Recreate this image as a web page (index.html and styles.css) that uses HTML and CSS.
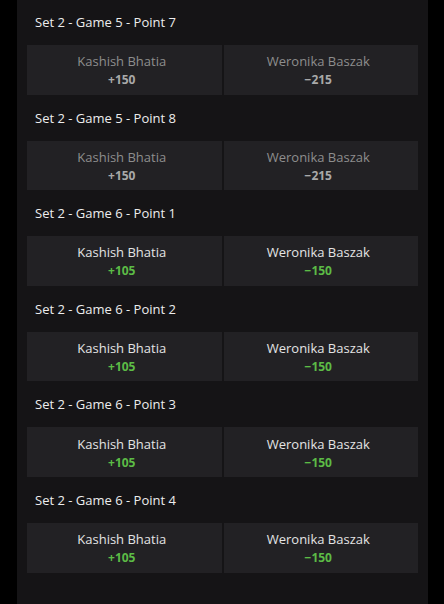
FILE: index.html
```html
<!DOCTYPE html>
<html>
<head>
<meta charset="utf-8">
<link rel="stylesheet" href="styles.css">
</head>
<body>
<div class="frame">
  <main class="panel">
    <section class="market">
      <h2 class="title">Set 2 - Game 5 - Point 7</h2>
      <div class="row">
        <div class="cell dim"><span class="name">Kashish Bhatia</span><span class="odds">+150</span></div>
        <div class="cell dim"><span class="name">Weronika Baszak</span><span class="odds">&minus;215</span></div>
      </div>
    </section>
    <section class="market">
      <h2 class="title">Set 2 - Game 5 - Point 8</h2>
      <div class="row">
        <div class="cell dim"><span class="name">Kashish Bhatia</span><span class="odds">+150</span></div>
        <div class="cell dim"><span class="name">Weronika Baszak</span><span class="odds">&minus;215</span></div>
      </div>
    </section>
    <section class="market">
      <h2 class="title">Set 2 - Game 6 - Point 1</h2>
      <div class="row">
        <div class="cell"><span class="name">Kashish Bhatia</span><span class="odds">+105</span></div>
        <div class="cell"><span class="name">Weronika Baszak</span><span class="odds">&minus;150</span></div>
      </div>
    </section>
    <section class="market">
      <h2 class="title">Set 2 - Game 6 - Point 2</h2>
      <div class="row">
        <div class="cell"><span class="name">Kashish Bhatia</span><span class="odds">+105</span></div>
        <div class="cell"><span class="name">Weronika Baszak</span><span class="odds">&minus;150</span></div>
      </div>
    </section>
    <section class="market">
      <h2 class="title">Set 2 - Game 6 - Point 3</h2>
      <div class="row">
        <div class="cell"><span class="name">Kashish Bhatia</span><span class="odds">+105</span></div>
        <div class="cell"><span class="name">Weronika Baszak</span><span class="odds">&minus;150</span></div>
      </div>
    </section>
    <section class="market">
      <h2 class="title">Set 2 - Game 6 - Point 4</h2>
      <div class="row">
        <div class="cell"><span class="name">Kashish Bhatia</span><span class="odds">+105</span></div>
        <div class="cell"><span class="name">Weronika Baszak</span><span class="odds">&minus;150</span></div>
      </div>
    </section>
  </main>
  <div class="scrolltrack"><div class="thumb"></div></div>
</div>
</body>
</html>
```

FILE: styles.css
```css
html, body {
  margin: 0;
  padding: 0;
  background: #000;
  height: 100%;
  overflow: hidden;
}
body {
  font-family: "Open Sans", "Noto Sans", sans-serif;
  color: #e8e8e8;
}
.frame {
  display: flex;
  height: 604px;
  padding-left: 17px;
}
.panel {
  width: 391px;
  background: #151416;
  padding: 0 10px;
  flex: none;
}
.market {
  display: flex;
  flex-direction: column;
  height: 95.6px;
}
.title {
  margin: 0;
  font-size: 13px;
  font-weight: 400;
  line-height: 20px;
  padding: 12px 0 13px 8px;
  color: #ededed;
}
.row {
  display: grid;
  grid-template-columns: 1fr 1fr;
  gap: 2px;
}
.cell {
  background: #222124;
  height: 49.6px;
  display: flex;
  flex-direction: column;
  align-items: center;
  justify-content: center;
  padding: 2px 5px 0 0;
  box-sizing: border-box;
}
.name {
  font-size: 13px;
  line-height: 18px;
  color: #e4e4e4;
}
.odds {
  font-size: 12px;
  font-weight: 700;
  line-height: 19px;
  color: #5cbb46;
}
.cell.dim .name {
  color: #8e8e8e;
}
.cell.dim .odds {
  color: #a9a9a9;
}
.scrolltrack {
  flex: 1;
  position: relative;
}
.thumb {
  position: absolute;
  left: 21px;
  top: 53px;
  width: 3px;
  height: 210px;
  background: #58575a;
  border-radius: 2px;
}
```
